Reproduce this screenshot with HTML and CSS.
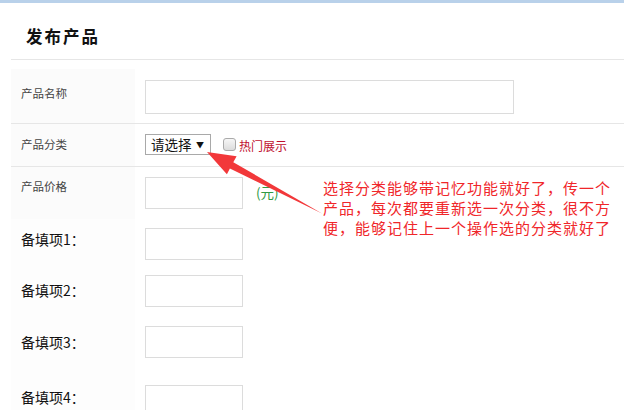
FILE: index.html
```html
<!DOCTYPE html>
<html lang="zh">
<head>
<meta charset="utf-8">
<link rel="stylesheet" href="styles.css">
</head>
<body>
<div class="page">
  <div class="topbar"></div>
  <h1 class="title">发布产品</h1>
  <div class="form">
    <div class="row row-name">
      <div class="label">产品名称</div>
      <div class="field"><div class="input input-wide"></div></div>
    </div>
    <div class="row row-cat">
      <div class="label">产品分类</div>
      <div class="field">
        <div class="select"><span>请选择</span><span class="caret">▼</span></div>
        <span class="check"></span><span class="hot">热门展示</span>
      </div>
    </div>
    <div class="row row-price">
      <div class="label">产品价格</div>
      <div class="field"><div class="input"></div><span class="unit">(元)</span></div>
    </div>
    <div class="row extra r1">
      <div class="label alt">备填项1：</div>
      <div class="field"><div class="input"></div></div>
    </div>
    <div class="row extra r2">
      <div class="label alt">备填项2：</div>
      <div class="field"><div class="input"></div></div>
    </div>
    <div class="row extra r3">
      <div class="label alt">备填项3：</div>
      <div class="field"><div class="input"></div></div>
    </div>
    <div class="row extra r4">
      <div class="label alt">备填项4：</div>
      <div class="field"><div class="input"></div></div>
    </div>
  </div>
  <svg class="arrow" width="624" height="410" viewBox="0 0 624 410">
    <polygon points="207,152 236.6,156.3 233.3,162.2 322,213.5 229.9,168.4 226.9,174.3" fill="#f2383a"/>
  </svg>
  <div class="note">
    <div class="note-line">选择分类能够带记忆功能就好了，传一个</div>
    <div class="note-line">产品，每次都要重新选一次分类，很不方</div>
    <div class="note-line">便，能够记住上一个操作选的分类就好了</div>
  </div>
</div>
</body>
</html>
```
FILE: styles.css
```css
html, body {
  margin: 0;
  padding: 0;
  background: #fff;
}
.page {
  position: relative;
  width: 624px;
  height: 410px;
  overflow: hidden;
  font-family: "Noto Sans CJK SC", "Noto Sans", sans-serif;
}
.topbar {
  height: 3px;
  background: #b9d1ea;
}
.title {
  margin: 0 0 0 11px;
  height: 57px;
  box-sizing: border-box;
  padding: 23px 0 0 15px;
  font-size: 16.5px;
  line-height: 20px;
  font-weight: bold;
  letter-spacing: 2px;
  color: #111;
  border-bottom: 1px solid #e6e6e6;
}
.form {
  margin-left: 11px;
}
.row {
  display: grid;
  grid-template-columns: 124px 1fr;
  box-sizing: border-box;
}
.label {
  background: #fbfbfb;
  font-size: 11.5px;
  color: #444;
  padding: 16px 0 0 10px;
  line-height: 16px;
  box-sizing: border-box;
}
.field {
  display: flex;
  align-items: flex-start;
  padding-left: 10px;
}
.input {
  width: 98px;
  height: 32px;
  box-sizing: border-box;
  border: 1px solid #dcdcdc;
  background: #fff;
}
.input-wide {
  width: 369px;
  height: 34px;
}
.row-name {
  padding-top: 9px;
  border-bottom: 1px solid #e6e6e6;
}
.row-name .label { height: 54px; }
.row-name .field { padding-top: 11px; }
.row-cat {
  border-bottom: 1px solid #e6e6e6;
}
.row-cat .label { height: 42px; padding-top: 12px; }
.row-cat .field { padding-top: 10px; align-items: center; height: 21px; }
.select {
  width: 66px;
  height: 21px;
  box-sizing: border-box;
  border: 1px solid #a9a9a9;
  display: flex;
  align-items: center;
  justify-content: space-between;
  padding: 0 6px 0 5px;
  font-size: 13.5px;
  color: #111;
  line-height: 19px;
}
.caret {
  font-size: 8px;
  line-height: 10px;
}
.check {
  width: 11px;
  height: 11px;
  border: 1px solid #aaa;
  border-radius: 3px;
  background: linear-gradient(#f6f6f6, #dcdcdc);
  margin-left: 12px;
  margin-top: 0;
}
.hot {
  font-size: 12px;
  color: #c0102f;
  margin-left: 3px;
  margin-top: 1px;
}
.row-price .label { height: 52px; padding-top: 11px; }
.row-price .field { padding-top: 10px; }
.unit {
  color: #2f9a45;
  font-size: 13.5px;
  margin: 5px 0 0 13px;
}
.extra .label.alt {
  background: #fdfdfd;
  font-size: 14px;
  line-height: 20px;
  color: #111;
  padding-left: 10px;
}
.extra .field { padding-top: 9px; }
.r1 { height: 47px; }
.r1 .label { padding-top: 10px; }
.r2 { height: 51px; }
.r2 .label { padding-top: 14px; }
.r3 { height: 59px; }
.r3 .label { padding-top: 15px; }
.r4 { height: 40px; }
.r4 .label { padding-top: 11px; }
.arrow {
  position: absolute;
  left: 0;
  top: 0;
}
.note {
  position: absolute;
  left: 323px;
  top: 178px;
  display: flex;
  flex-direction: column;
  color: #f0262a;
  white-space: nowrap;
}
.note-line {
  height: 20px;
  font-size: 15px;
  line-height: 20px;
  letter-spacing: 1px;
}
```
